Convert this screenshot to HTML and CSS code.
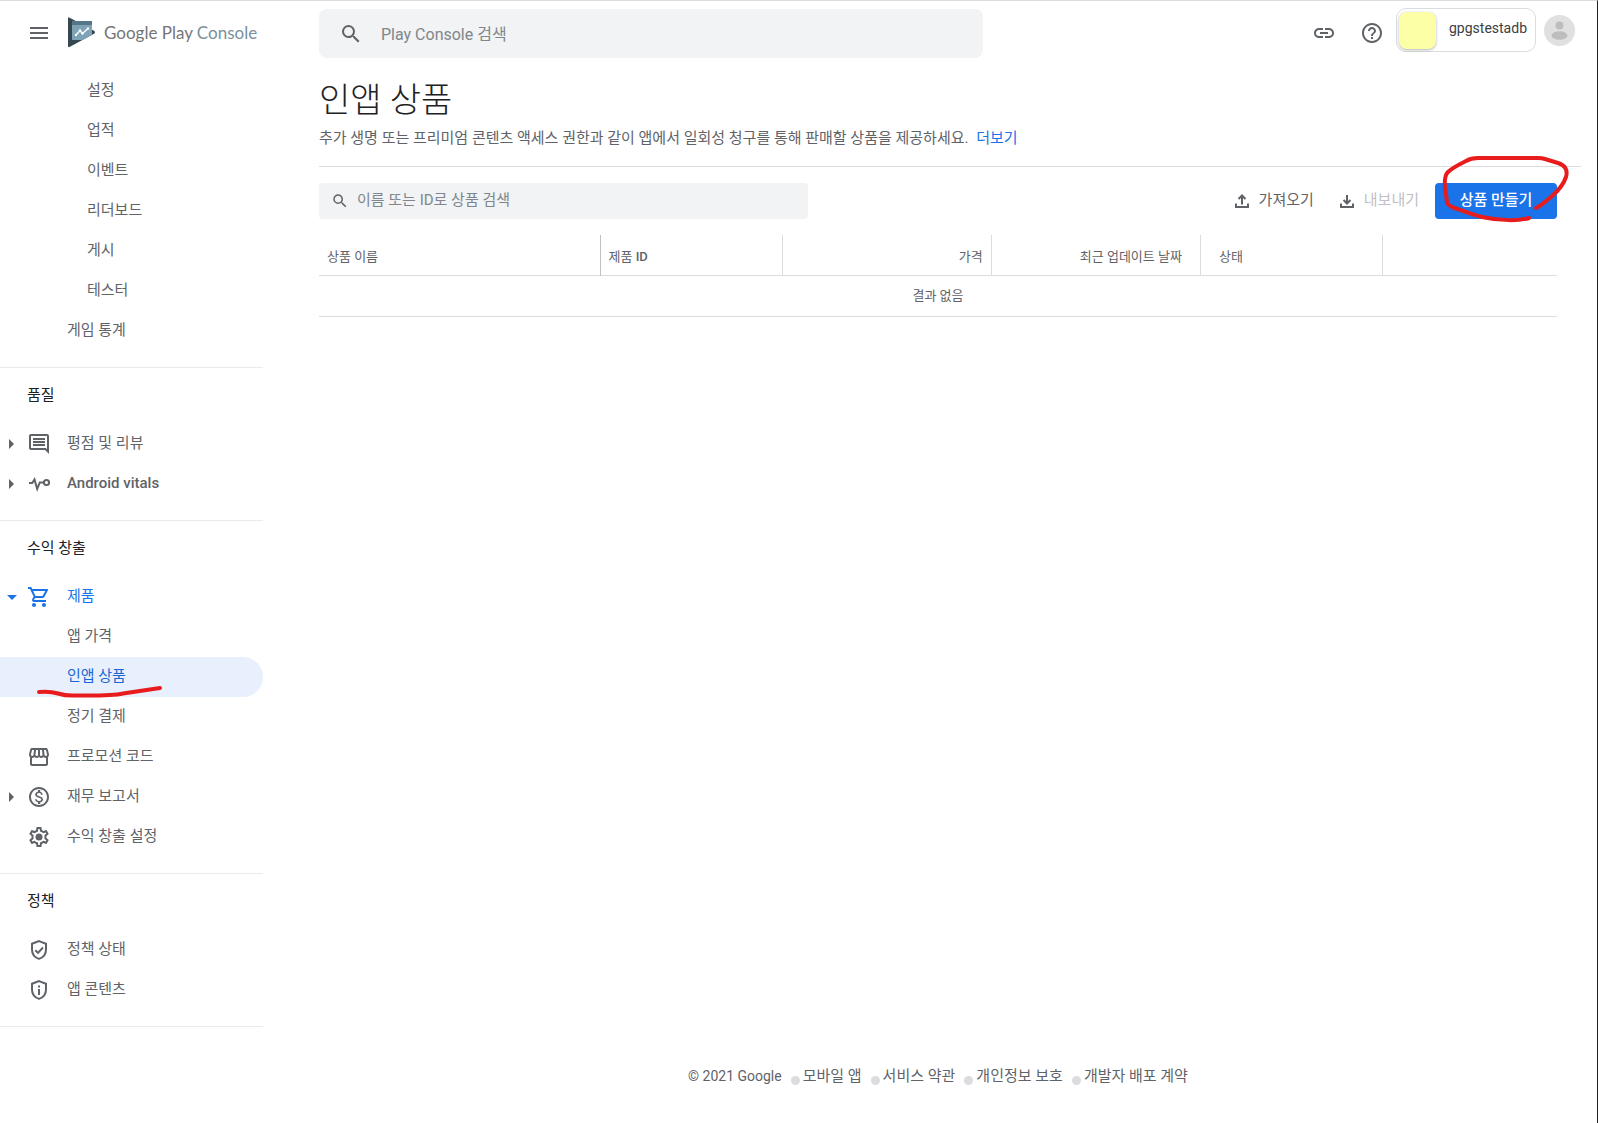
FILE: index.html
```html
<!DOCTYPE html>
<html lang="ko">
<head>
<meta charset="utf-8">
<title>인앱 상품 - Google Play Console</title>
<link rel="stylesheet" href="styles.css">
</head>
<body>
<div class="page">
  <header class="topbar">
    <div class="brand">
      <button class="icon-button" type="button" aria-label="메뉴">
        <svg class="icon" viewBox="0 0 24 24"><path d="M3 18h18v-2H3v2zm0-5h18v-2H3v2zm0-7v2h18V6H3z"/></svg>
      </button>
      <a class="logo" href="#">
        <svg class="logo-mark" viewBox="0 0 28 31" aria-hidden="true">
          <path fill="#37474f" d="M0 1.2Q0 0 1.2.5L26 13.8Q28 15.3 26 16.8L1.500 30Q0 30.500 0 29z"/>
          <path fill="#7ea3b7" d="M4 4h20v14l-9.500 5H4z"/>
          <path fill="#557688" d="M4 4h20v4H4z"/>
          <path fill="none" stroke="#fff" stroke-width="1.400" d="M8 18l4-4.500 2.500 3L20 11.500"/>
          <g fill="#fff"><circle cx="8" cy="18" r="1.200"/><circle cx="12" cy="13.500" r="1.200"/><circle cx="14.500" cy="16.500" r="1.200"/><circle cx="20" cy="11.500" r="1.200"/></g>
        </svg>
        <span class="logo-text"><span class="logo-strong">Google Play</span> Console</span>
      </a>
    </div>
    <form class="global-search">
      <svg class="icon" viewBox="0 0 24 24"><path d="M15.500 14h-.79l-.28-.27A6.471 6.471 0 0 0 16 9.500 6.500 6.500 0 1 0 9.500 16c1.610 0 3.090-.59 4.230-1.570l.27.28v.79l5 4.990L20.490 19l-4.990-5zm-6 0C7.010 14 5 11.990 5 9.500S7.010 5 9.500 5 14 7.010 14 9.500 11.990 14 9.500 14z"/></svg>
      <input type="search" aria-label="Play Console 검색" placeholder="Play Console 검색">
    </form>
    <div class="actions">
      <button class="icon-button" type="button" aria-label="링크">
        <svg class="icon" viewBox="0 0 24 24"><path d="M3.900 12c0-1.710 1.390-3.100 3.100-3.100h4V7H7c-2.760 0-5 2.240-5 5s2.240 5 5 5h4v-1.900H7c-1.710 0-3.100-1.390-3.100-3.100zM8 13h8v-2H8v2zm9-6h-4v1.900h4c1.710 0 3.100 1.390 3.100 3.100s-1.390 3.100-3.100 3.100h-4V17h4c2.760 0 5-2.240 5-5s-2.240-5-5-5z"/></svg>
      </button>
      <button class="icon-button" type="button" aria-label="도움말">
        <svg class="icon" viewBox="0 0 24 24"><path d="M11 18h2v-2h-2v2zm1-16C6.480 2 2 6.480 2 12s4.480 10 10 10 10-4.480 10-10S17.520 2 12 2zm0 18c-4.410 0-8-3.590-8-8s3.590-8 8-8 8 3.590 8 8-3.590 8-8 8zm0-14c-2.210 0-4 1.790-4 4h2c0-1.100.9-2 2-2s2 .9 2 2c0 2-3 1.750-3 5h2c0-2.250 3-2.500 3-5 0-2.210-1.790-4-4-4z"/></svg>
      </button>
    </div>
    <div class="account">
      <button class="app-chip" type="button"><span class="app-thumb"></span><span class="app-name">gpgstestadb</span></button>
      <button class="icon-button" type="button" aria-label="계정">
        <svg class="avatar" viewBox="0 0 31 31"><circle cx="15.500" cy="15.500" r="15.500" fill="#e0e0e0"/><circle cx="15.500" cy="10.500" r="4" fill="#bdbdbd"/><ellipse cx="15.500" cy="20.500" rx="8" ry="4.300" fill="#bdbdbd"/></svg>
      </button>
    </div>
  </header>

  <div class="body">
    <nav class="sidebar">
      <ul class="group">
        <li><a class="item deep" href="#"><span>설정</span></a></li>
        <li><a class="item deep" href="#"><span>업적</span></a></li>
        <li><a class="item deep" href="#"><span>이벤트</span></a></li>
        <li><a class="item deep" href="#"><span>리더보드</span></a></li>
        <li><a class="item deep" href="#"><span>게시</span></a></li>
        <li><a class="item deep" href="#"><span>테스터</span></a></li>
        <li><a class="item sub" href="#"><span>게임 통계</span></a></li>
      </ul>
      <h2 class="group-title">품질</h2>
      <ul class="group">
        <li><a class="item" href="#"><i class="arrow right"></i>
          <svg class="icon" viewBox="0 0 24 24"><path d="M21.990 4c0-1.100-.89-2-1.990-2H4c-1.100 0-2 .9-2 2v12c0 1.100.9 2 2 2h14l4 4-.01-18zM20 4v13.170L18.830 16H4V4h16zM6 12h12v2H6v-2zm0-3h12v2H6V9zm0-3h12v2H6V6z"/></svg>
          <span>평점 및 리뷰</span></a></li>
        <li><a class="item" href="#"><i class="arrow right"></i>
          <svg class="icon line" viewBox="0 0 24 24"><path d="M2 11h3.200L7.500 7.500 10.200 17l2.600-6.500h4"/><circle cx="19.500" cy="10.500" r="2.600"/></svg>
          <span class="latin">Android vitals</span></a></li>
      </ul>
      <h2 class="group-title">수익 창출</h2>
      <ul class="group">
        <li><a class="item open" href="#"><i class="arrow down"></i>
          <svg class="icon" viewBox="0 0 24 24"><path d="M15.550 13c.75 0 1.410-.41 1.750-1.030l3.580-6.490A.996.996 0 0 0 20.010 4H5.210l-.94-2H1v2h2l3.600 7.590-1.350 2.440C4.520 15.370 5.480 17 7 17h12v-2H7l1.100-2h7.450zM6.160 6h12.150l-2.760 5H8.530L6.160 6zM7 18c-1.100 0-1.990.9-1.990 2S5.900 22 7 22s2-.9 2-2-.9-2-2-2zm10 0c-1.100 0-1.990.9-1.990 2s.89 2 1.990 2 2-.9 2-2-.9-2-2-2z"/></svg>
          <span>제품</span></a></li>
        <li><a class="item sub" href="#"><span>앱 가격</span></a></li>
        <li class="marked"><a class="item sub selected" href="#" aria-current="page"><span>인앱 상품</span></a>
          <svg class="mark-underline" viewBox="0 0 128 12" aria-hidden="true"><path d="M3 7Q14 6 22 8.500T40 10.500Q76 11 87 8.500L124 3"/></svg></li>
        <li><a class="item sub" href="#"><span>정기 결제</span></a></li>
        <li><a class="item" href="#"><i class="arrow"></i>
          <svg class="icon" viewBox="0 0 24 24"><path d="M21.900 8.890l-1.050-4.370c-.22-.9-1-1.520-1.910-1.520H5.050c-.9 0-1.690.63-1.900 1.520L2.100 8.890c-.24 1.020-.02 2.060.62 2.880.08.11.19.19.28.29V19c0 1.100.9 2 2 2h14c1.100 0 2-.9 2-2v-6.940c.09-.09.2-.18.28-.28.64-.82.87-1.870.62-2.890zm-2.990-3.900l1.050 4.370c.1.42.01.84-.25 1.170-.14.18-.44.47-.94.47-.61 0-1.140-.49-1.210-1.140L16.980 5l1.930-.01zM13 5h1.960l.54 4.520c.05.39-.07.78-.33 1.070-.22.26-.54.41-.95.41-.67 0-1.220-.59-1.220-1.310V5zM8.490 9.520L9.040 5H11v4.690c0 .72-.55 1.310-1.290 1.310-.34 0-.65-.15-.89-.41-.25-.29-.37-.68-.33-1.070zm-4.450-.16L5.050 5h1.970l-.58 4.860c-.08.65-.6 1.140-1.210 1.140-.49 0-.8-.29-.93-.47-.27-.32-.36-.75-.26-1.170zM5 19v-6.030c.08.01.15.03.23.03.87 0 1.660-.36 2.240-.95.6.6 1.400.95 2.310.95.87 0 1.650-.36 2.230-.93.59.57 1.390.93 2.290.93.84 0 1.640-.35 2.240-.95.58.59 1.370.95 2.240.95.08 0 .15-.02.23-.03V19H5z"/></svg>
          <span>프로모션 코드</span></a></li>
        <li><a class="item" href="#"><i class="arrow right"></i>
          <svg class="icon" viewBox="0 0 24 24"><path d="M12 2C6.480 2 2 6.480 2 12s4.480 10 10 10 10-4.480 10-10S17.520 2 12 2zm0 18c-4.410 0-8-3.590-8-8s3.590-8 8-8 8 3.590 8 8-3.590 8-8 8zm.31-8.860c-1.770-.45-2.340-.94-2.340-1.670 0-.84.79-1.430 2.100-1.430 1.380 0 1.900.66 1.940 1.640h1.710c-.05-1.340-.87-2.570-2.490-2.970V5H10.900v1.690c-1.510.32-2.720 1.300-2.720 2.810 0 1.790 1.490 2.690 3.660 3.210 1.950.46 2.340 1.150 2.340 1.870 0 .53-.39 1.390-2.100 1.390-1.600 0-2.230-.72-2.320-1.640H8.040c.1 1.700 1.360 2.660 2.860 2.970V19h2.340v-1.670c1.520-.29 2.720-1.160 2.730-2.770-.01-2.200-1.900-2.960-3.660-3.420z"/></svg>
          <span>재무 보고서</span></a></li>
        <li><a class="item" href="#"><i class="arrow"></i>
          <svg class="icon" viewBox="0 0 24 24"><path d="M19.430 12.980c.04-.32.07-.64.07-.98 0-.34-.03-.66-.07-.98l2.110-1.650c.19-.15.24-.42.12-.64l-2-3.460c-.09-.16-.26-.25-.44-.25-.06 0-.12.01-.17.03l-2.490 1c-.52-.4-1.080-.73-1.690-.98l-.38-2.650C14.460 2.180 14.250 2 14 2h-4c-.25 0-.46.18-.49.42l-.38 2.650c-.61.25-1.170.59-1.690.98l-2.490-1c-.06-.02-.12-.03-.18-.03-.17 0-.34.09-.43.25l-2 3.460c-.13.22-.07.49.12.64l2.110 1.650c-.04.32-.07.65-.07.98 0 .33.03.66.07.98l-2.110 1.650c-.19.15-.24.42-.12.64l2 3.460c.09.16.26.25.44.25.06 0 .12-.01.17-.03l2.490-1c.52.4 1.080.73 1.690.98l.38 2.650c.03.24.24.42.49.42h4c.25 0 .46-.18.49-.42l.38-2.650c.61-.25 1.170-.59 1.690-.98l2.490 1c.06.02.12.03.18.03.17 0 .34-.09.43-.25l2-3.460c.12-.22.07-.49-.12-.64l-2.110-1.650zm-1.980-1.710c.04.31.05.52.05.73 0 .21-.02.43-.05.73l-.14 1.130.89.7 1.080.84-.7 1.210-1.270-.51-1.040-.42-.9.68c-.43.32-.84.56-1.250.73l-1.060.43-.16 1.130-.2 1.350h-1.400l-.19-1.350-.16-1.130-1.060-.43c-.43-.18-.83-.41-1.230-.71l-.91-.7-1.060.43-1.270.51-.7-1.210 1.080-.84.89-.7-.14-1.130c-.03-.31-.05-.54-.05-.74s.02-.43.05-.73l.14-1.130-.89-.7-1.080-.84.7-1.210 1.270.51 1.040.42.9-.68c.43-.32.84-.56 1.250-.73l1.060-.43.16-1.130.2-1.350h1.390l.19 1.350.16 1.130 1.060.43c.43.18.83.41 1.230.71l.91.7 1.060-.43 1.270-.51.7 1.210-1.070.85-.89.7.14 1.130z"/><circle cx="12" cy="12" r="3.500"/></svg>
          <span>수익 창출 설정</span></a></li>
      </ul>
      <h2 class="group-title">정책</h2>
      <ul class="group">
        <li><a class="item" href="#"><i class="arrow"></i>
          <svg class="icon line" viewBox="0 0 24 24"><path d="M12 3.100l7 2.700v5.700c0 4.200-2.800 8-7 9.400-4.200-1.400-7-5.200-7-9.400V5.800z"/><path d="M8.300 12.200l2.700 2.700 5-5.400"/></svg>
          <span>정책 상태</span></a></li>
        <li><a class="item" href="#"><i class="arrow"></i>
          <svg class="icon line" viewBox="0 0 24 24"><path d="M12 3.100l7 2.700v5.700c0 4.200-2.800 8-7 9.400-4.200-1.400-7-5.200-7-9.400V5.800z"/><path d="M12 11v6M12 7.500v2"/></svg>
          <span>앱 콘텐츠</span></a></li>
      </ul>
    </nav>

    <main class="main">
      <div class="intro">
        <h1>인앱 상품</h1>
        <p>추가 생명 또는 프리미엄 콘텐츠 액세스 권한과 같이 앱에서 일회성 청구를 통해 판매할 상품을 제공하세요. <a class="more" href="#">더보기</a></p>
      </div>
      <div class="content">
        <div class="toolbar">
          <form class="table-search">
            <svg class="icon small" viewBox="0 0 24 24"><path d="M15.500 14h-.79l-.28-.27A6.471 6.471 0 0 0 16 9.500 6.500 6.500 0 1 0 9.500 16c1.610 0 3.090-.59 4.230-1.570l.27.28v.79l5 4.990L20.490 19l-4.990-5zm-6 0C7.010 14 5 11.990 5 9.500S7.010 5 9.500 5 14 7.010 14 9.500 11.990 14 9.500 14z"/></svg>
            <input type="search" aria-label="이름 또는 ID로 상품 검색" placeholder="이름 또는 ID로 상품 검색">
          </form>
          <div class="tools">
            <button class="text-button" type="button"><svg class="icon small line" viewBox="0 0 18 18"><path d="M3 11.500V15h12v-3.500M9 12.500V4M5.500 7L9 3.500 12.500 7"/></svg><span>가져오기</span></button>
            <button class="text-button" type="button" disabled><svg class="icon small line" viewBox="0 0 18 18"><path d="M3 11.500V15h12v-3.500M9 3v8M5.500 8L9 11.500 12.500 8"/></svg><span>내보내기</span></button>
            <div class="marked">
              <button class="primary" type="button">상품 만들기</button>
              <svg class="mark-circle" viewBox="0 0 130 70" aria-hidden="true"><path d="M96 53C101 51 106 46 112 41C119 35 124 28 126 22C128 15 125 10 118 8L105 4Q102 3 98 3H38Q31 3 26 6C18 10 12 13 8 17Q4 21 5 32L7 47Q7 49 12 52C23 56 33 60 42 62C60 66 80 66 89 63"/></svg>
            </div>
          </div>
        </div>
        <table class="products">
          <colgroup><col class="c-name"><col class="c-id"><col class="c-price"><col class="c-date"><col class="c-state"><col></colgroup>
          <thead><tr><th>상품 이름</th><th>제품 <span class="latin">ID</span></th><th class="num">가격</th><th class="num date">최근 업데이트 날짜</th><th class="state">상태</th><th></th></tr></thead>
          <tbody><tr><td colspan="6">결과 없음</td></tr></tbody>
        </table>
      </div>
      <footer class="footer">
        <span class="copyright">© 2021 Google</span>
        <a href="#">모바일 앱</a>
        <a href="#">서비스 약관</a>
        <a href="#">개인정보 보호</a>
        <a href="#">개발자 배포 계약</a>
      </footer>
    </main>
  </div>
</div>
</body>
</html>
```
FILE: styles.css
```css
* { box-sizing: border-box; }

body {
  margin: 0;
  background: #fff;
  color: #5f6368;
  font-family: Roboto, "Noto Sans CJK KR", sans-serif;
  font-size: 15px;
  line-height: 20px;
}

h1, h2, p, ul { margin: 0; padding: 0; font-weight: 400; }
ul { list-style: none; }
a { color: inherit; text-decoration: none; }
button, input { font: inherit; color: inherit; border: 0; padding: 0; background: none; }
input { flex: 1; min-width: 0; outline: 0; }
input::placeholder { color: #80868b; opacity: 1; }
form { margin: 0; }
svg { display: block; flex: none; }

.icon { width: 24px; height: 24px; fill: currentColor; }
.icon.small { width: 18px; height: 18px; }
.icon.line { fill: none; stroke: currentColor; stroke-width: 2; }
.icon-button { display: flex; }

.page {
  min-height: 100vh;
  display: flex;
  flex-direction: column;
  border-top: 1px solid #dadce0;
  border-right: 1px solid #202124;
}

/* Top bar */
.topbar {
  height: 70px;
  display: flex;
  align-items: flex-start;
  padding: 7px 22px 0 0;
}
.brand {
  width: 319px;
  height: 49px;
  flex: none;
  display: flex;
  align-items: center;
  gap: 17px;
  padding-left: 27px;
}
.logo { display: flex; align-items: center; gap: 8px; }
.logo-mark { width: 28px; height: 31px; }
.logo-text {
  font-family: Lato, Roboto, sans-serif;
  font-size: 17px;
  line-height: 24px;
  color: #78909c;
}
.logo-strong { color: #757575; }
.global-search {
  flex: 0 1 664px;
  height: 49px;
  margin-top: 1px;
  display: flex;
  align-items: center;
  gap: 18px;
  padding: 0 20px;
  border-radius: 8px;
  background: #f1f3f4;
  font-size: 16px;
}
.global-search input { padding-top: 3px; }
.actions {
  height: 49px;
  margin-left: auto;
  display: flex;
  align-items: center;
  gap: 24px;
}
.account { display: flex; align-items: center; gap: 8px; margin-left: 12px; }
.app-chip {
  height: 44px;
  display: flex;
  align-items: center;
  gap: 13px;
  padding: 0 8px 0 2px;
  border: 1px solid #dadce0;
  border-radius: 10px;
  color: #3c4043;
}
.app-thumb {
  width: 37px;
  height: 37px;
  border-radius: 8px;
  background: #fdffa6;
  box-shadow: 0 1px 3px rgba(60, 64, 67, .4);
}
.app-name { padding-bottom: 4px; font-size: 14px; }
.avatar { width: 31px; height: 31px; }

/* Side navigation */
.body { flex: 1; display: flex; }
.sidebar { width: 263px; flex: none; }
.group { padding-bottom: 16px; border-bottom: 1px solid #e8eaed; }
.group-title {
  height: 56px;
  padding: 17px 27px;
  font-size: 15px;
  line-height: 20px;
  color: #202124;
}
.item {
  height: 40px;
  display: flex;
  align-items: center;
  border-radius: 0 20px 20px 0;
}
.item span { padding-bottom: 2px; }
.item .icon { margin-right: 16px; }
.item.sub { padding-left: 67px; }
.item.deep { padding-left: 87px; }
.item.open { color: #1a73e8; }
.item.selected { background: #e8f0fe; color: #1967d2; }
.latin { font-weight: 500; }
.arrow { width: 27px; height: 10px; flex: none; display: flex; justify-content: center; align-items: center; padding-right: 4px; }
.arrow.right::before { content: ""; border: 5px solid transparent; border-left-color: currentColor; border-right-width: 0; }
.arrow.down::before { content: ""; border: 5px solid transparent; border-top-color: currentColor; border-bottom-width: 0; }

/* Hand-drawn marks laid over the controls they point at */
.marked { position: relative; }
.mark-underline, .mark-circle {
  position: absolute;
  fill: none;
  stroke: #e81c1c;
  stroke-width: 4;
  stroke-linecap: round;
  pointer-events: none;
}
.mark-underline { left: 36px; top: 28px; width: 128px; height: 12px; overflow: visible; }
.mark-circle { left: 5px; top: -28px; width: 130px; height: 70px; }

/* Main column */
.main {
  flex: 1;
  min-width: 0;
  display: flex;
  flex-direction: column;
  padding: 5px 16px 37px 56px;
}
.intro { padding-bottom: 18px; border-bottom: 1px solid #dadce0; }
.intro h1 { font-size: 34px; line-height: 48px; font-weight: 300; color: #202124; }
.intro p { margin-top: 4px; line-height: 20px; }
.more { margin-left: 4px; color: #1a73e8; }
.content { padding: 16px 24px 0 0; }
.toolbar { display: flex; align-items: center; justify-content: space-between; }
.table-search {
  flex: 0 1 489px;
  height: 36px;
  display: flex;
  align-items: center;
  gap: 8px;
  padding: 0 12px;
  border-radius: 4px;
  background: #f1f3f4;
}
.table-search input, .text-button span { padding-bottom: 2px; }
.tools { display: flex; align-items: center; }
.text-button { display: flex; align-items: center; gap: 8px; margin-right: 24px; }
.text-button:disabled span { color: #bdc1c6; }
.text-button:disabled { margin-right: 16px; color: #5f6368; }
.primary {
  width: 122px;
  height: 36px;
  padding-bottom: 2px;
  border-radius: 4px;
  background: #1a73e8;
  color: #fff;
  font-weight: 500;
}
.products {
  width: 100%;
  margin-top: 16px;
  table-layout: fixed;
  border-collapse: collapse;
  font-size: 13px;
}
.c-name { width: 22.7%; }
.c-id, .c-state { width: 14.7%; }
.c-price, .c-date { width: 16.9%; }
.products th {
  height: 40px;
  padding: 4px 8px 0;
  font-weight: 400;
  text-align: left;
  border-right: 1px solid #dadce0;
}
.products th:first-child { border-right-color: #bdc1c6; }
.products th:last-child { border-right: 0; }
.products th.num { text-align: right; }
.products th.date { padding-right: 18px; }
.products th.state { padding-left: 18px; }
.products tr { border-bottom: 1px solid #dadce0; }
.products td { height: 41px; padding: 0; text-align: center; }

.footer {
  margin-top: auto;
  padding-right: 24px;
  display: flex;
  justify-content: center;
  gap: 9px;
}
.copyright { font-size: 14px; }
.footer a { display: flex; align-items: center; gap: 3px; }
.footer a::before {
  content: "";
  width: 9px;
  height: 9px;
  margin-top: 8px;
  border-radius: 50%;
  background: #dadce0;
}
```
